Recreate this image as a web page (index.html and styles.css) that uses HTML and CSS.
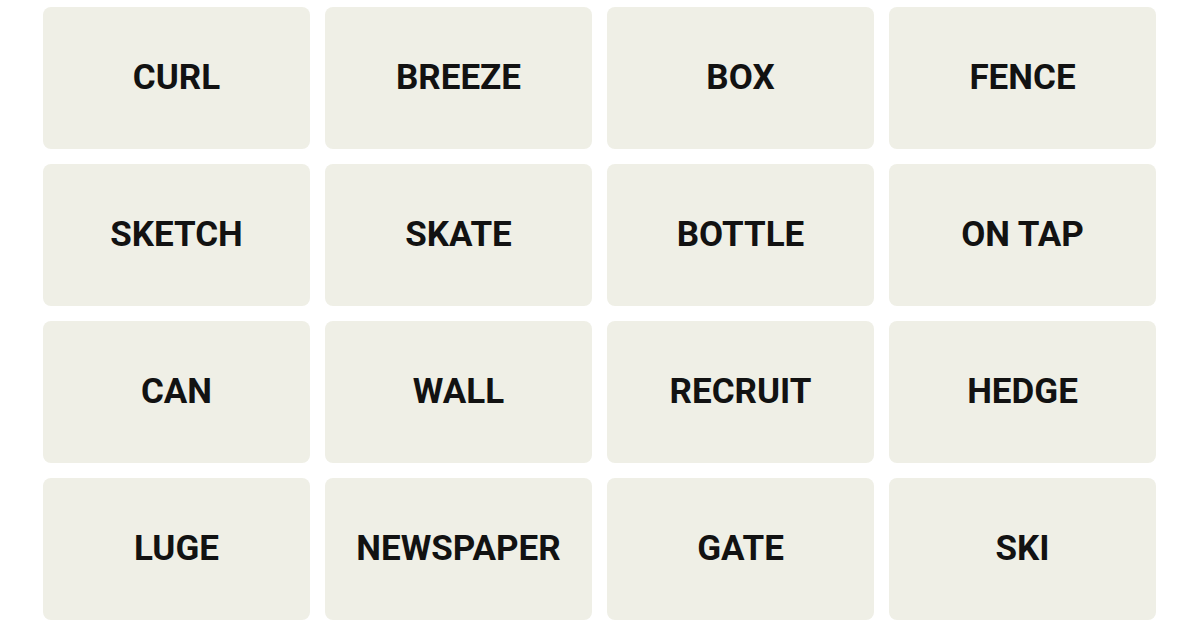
FILE: index.html
```html
<!DOCTYPE html>
<html lang="en">
<head>
    <meta charset="UTF-8">
    <title>Connections</title>
    <link rel="stylesheet" href="styles.css">
</head>
<body>
    <div class="board">
        <div class="tile">CURL</div>
        <div class="tile">BREEZE</div>
        <div class="tile">BOX</div>
        <div class="tile">FENCE</div>
        <div class="tile">SKETCH</div>
        <div class="tile">SKATE</div>
        <div class="tile">BOTTLE</div>
        <div class="tile">ON TAP</div>
        <div class="tile">CAN</div>
        <div class="tile">WALL</div>
        <div class="tile">RECRUIT</div>
        <div class="tile">HEDGE</div>
        <div class="tile">LUGE</div>
        <div class="tile">NEWSPAPER</div>
        <div class="tile">GATE</div>
        <div class="tile">SKI</div>
    </div>
</body>
</html>
```
FILE: styles.css
```css
body {
    margin: 0;
    background-color: #ffffff;
    font-family: Roboto, "Liberation Sans", sans-serif;
}

.board {
    display: grid;
    grid-template-columns: repeat(4, 267px);
    grid-auto-rows: 142px;
    gap: 15px;
    padding: 7px 0 0 43px;
}

.tile {
    display: flex;
    align-items: center;
    justify-content: center;
    padding-bottom: 2px;
    background-color: #efefe6;
    border-radius: 8px;
    font-size: 35px;
    font-weight: 700;
    color: #121212;
}
```
